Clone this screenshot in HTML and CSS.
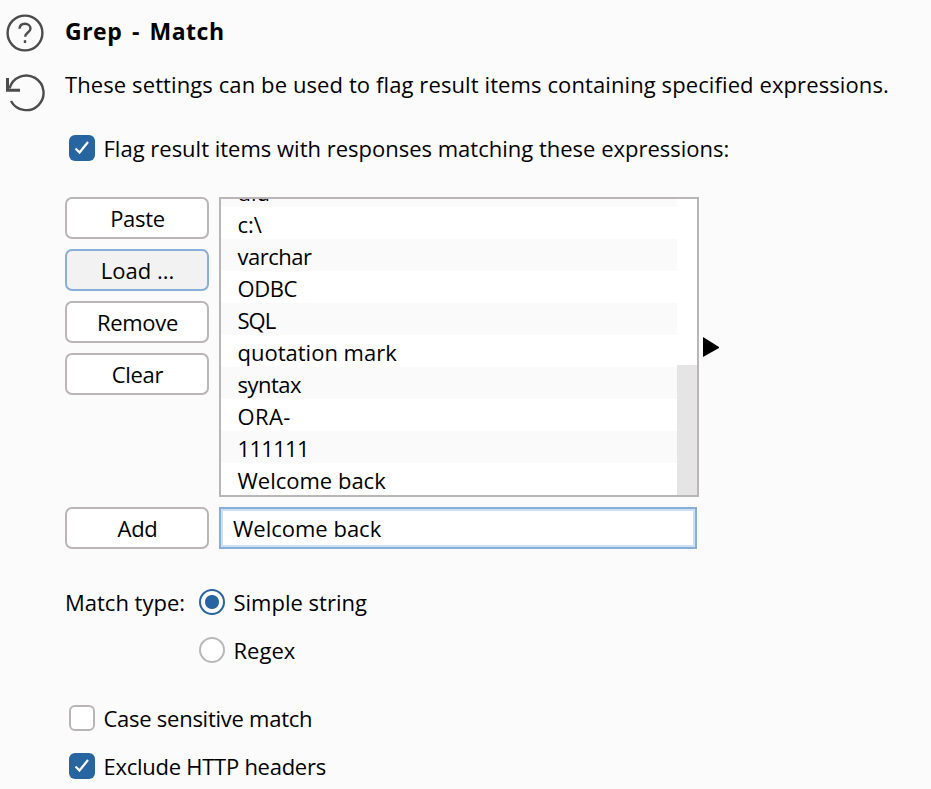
FILE: index.html
```
<!DOCTYPE html>
<html lang="en">
<head>
<meta charset="utf-8">
<title>Grep - Match</title>
<link rel="stylesheet" href="styles.css">
</head>
<body>
<main class="panel">
  <aside class="tools">
    <svg class="tool help" width="40" height="40" viewBox="0 0 40 40"><circle cx="20" cy="20" r="17.4"/><path d="M14.500 15.800c.2-3.200 2.500-5 5.500-5s5.500 1.900 5.500 4.700c0 4.100-5.400 3.900-5.400 8.300"/><path d="M20 27.200v2.800"/></svg>
    <svg class="tool" width="40" height="40" viewBox="0 0 40 40"><path d="M4.500 14.500A17.300 17.300 0 1 1 6 27"/><path class="head" d="M2.500 4v12.200H15"/></svg>
  </aside>
  <section class="content">
    <h1>Grep - Match</h1>
    <p class="intro">These settings can be used to flag result items containing specified expressions.</p>
    <label class="option flag"><span class="box checked"><svg width="26" height="26" viewBox="0 0 26 26"><path d="M6.500 13.500l4 4 8.500-10.500"/></svg></span><span class="text">Flag result items with responses matching these expressions:</span></label>
    <div class="editor">
      <div class="buttons">
        <button>Paste</button>
        <button class="active">Load ...</button>
        <button>Remove</button>
        <button>Clear</button>
      </div>
      <div class="list">
        <ul>
          <li>uid</li><li>c:\</li><li class="tight">varchar</li><li class="caps">ODBC</li><li class="sql">SQL</li><li>quotation mark</li><li class="tight">syntax</li><li class="loose">ORA-</li><li class="digits">111111</li><li>Welcome back</li>
        </ul>
        <div class="track"><div class="thumb"></div></div>
      </div>
      <svg class="arrow" width="16" height="20" viewBox="0 0 16 20"><path d="M0 0L16 10V11L0 20z"/></svg>
    </div>
    <div class="add-row"><button>Add</button><div class="field">Welcome back</div></div>
    <div class="match">
      <span class="match-label">Match type:</span>
      <div class="radios">
        <label class="option"><span class="radio on"></span><span class="text">Simple string</span></label>
        <label class="option"><span class="radio"></span><span class="text">Regex</span></label>
      </div>
    </div>
    <div class="checks">
      <label class="option"><span class="box"></span><span class="text">Case sensitive match</span></label>
      <label class="option"><span class="box checked"><svg width="26" height="26" viewBox="0 0 26 26"><path d="M6.500 13.500l4 4 8.500-10.500"/></svg></span><span class="text">Exclude HTTP headers</span></label>
    </div>
  </section>
</main>
</body>
</html>
```
FILE: styles.css
```
* { box-sizing: border-box; }
body {
  margin: 0;
  background: #fbfbfb;
  color: #000;
  font: 22px/32px "Open Sans", "Noto Sans", sans-serif;
  white-space: nowrap;
}
.panel { display: flex; height: 789px; overflow: hidden; }
.tools { width: 65px; padding: 13px 0 0 5px; display: flex; flex-direction: column; gap: 21px; }
.tool { fill: none; stroke: #4c4c4c; stroke-width: 2.4; }
.tool .head { stroke-width: 3; }
.content { flex: 1; padding-top: 15px; }
h1 { margin: 0; font-size: 23px; line-height: 32px; font-weight: 700; letter-spacing: .5px; word-spacing: 3.2px; }
.intro { margin: 21px 0 0; letter-spacing: .1px; }
.option { display: flex; align-items: center; gap: 8.500px; height: 32px; }
.option .text { margin-top: -2px; }
.flag { margin: 33px 0 0 4px; height: 32px; }
.box { width: 26px; height: 26px; border: 2px solid #b9b5b5; border-radius: 6px; background: #fff; flex: none; margin-top: -2px; }
.box.checked { border: 0; background: #26659f; }
.box svg { display: block; fill: none; stroke: #fff; stroke-width: 2.2; }
.editor { display: flex; margin-top: 32px; }
.buttons { width: 144px; display: flex; flex-direction: column; gap: 10px; }
button {
  width: 144px; height: 42px; padding: 0 0 0 1px;
  border: 2px solid #bab5b7; border-radius: 7px;
  background: #fff; color: #000; font: inherit; letter-spacing: -.3px;
}
button.active { border-color: #87afda; background: #f2f2f2; letter-spacing: 0; }
.list { width: 480px; height: 300px; margin-left: 10px; border: 2px solid #bab5b7; background: #fff; display: flex; align-items: flex-end; overflow: hidden; }
ul { width: 456px; margin: 0; padding: 0; list-style: none; }
li { height: 32px; padding: 1px 0 0 16.500px; }
li:nth-child(odd) { background: #fafafa; }
li.tight { letter-spacing: -.5px; }
li.caps { letter-spacing: -.4px; }
li.sql { letter-spacing: -1px; }
li.loose { letter-spacing: .4px; }
li.digits { letter-spacing: -.7px; }
.track { width: 20px; height: 296px; display: flex; align-items: flex-end; }
.thumb { width: 20px; height: 130px; background: #e5e5e5; }
.arrow { align-self: center; margin-left: 4px; }
.add-row { display: flex; gap: 10px; margin-top: 10px; }
.field { width: 478px; height: 42px; border: 2px solid #87afda; box-shadow: inset 0 0 0 2px #cce1f8; background: #fff; padding: 3px 0 0 12px; }
.match { display: flex; margin-top: 38px; }
.match-label { width: 134px; margin-top: -1px; }
.radios { display: flex; flex-direction: column; gap: 16px; }
.radio { width: 26px; height: 26px; border: 2px solid #bab9b9; border-radius: 50%; background: #fff; flex: none; margin-top: -2px; }
.radio.on { border-width: 2.500px; border-color: #26659f; background: radial-gradient(circle, #26659f 0 6.500px, #fff 7.500px); }
.checks { margin: 36px 0 0 4px; display: flex; flex-direction: column; gap: 16px; letter-spacing: -.26px; }
```
